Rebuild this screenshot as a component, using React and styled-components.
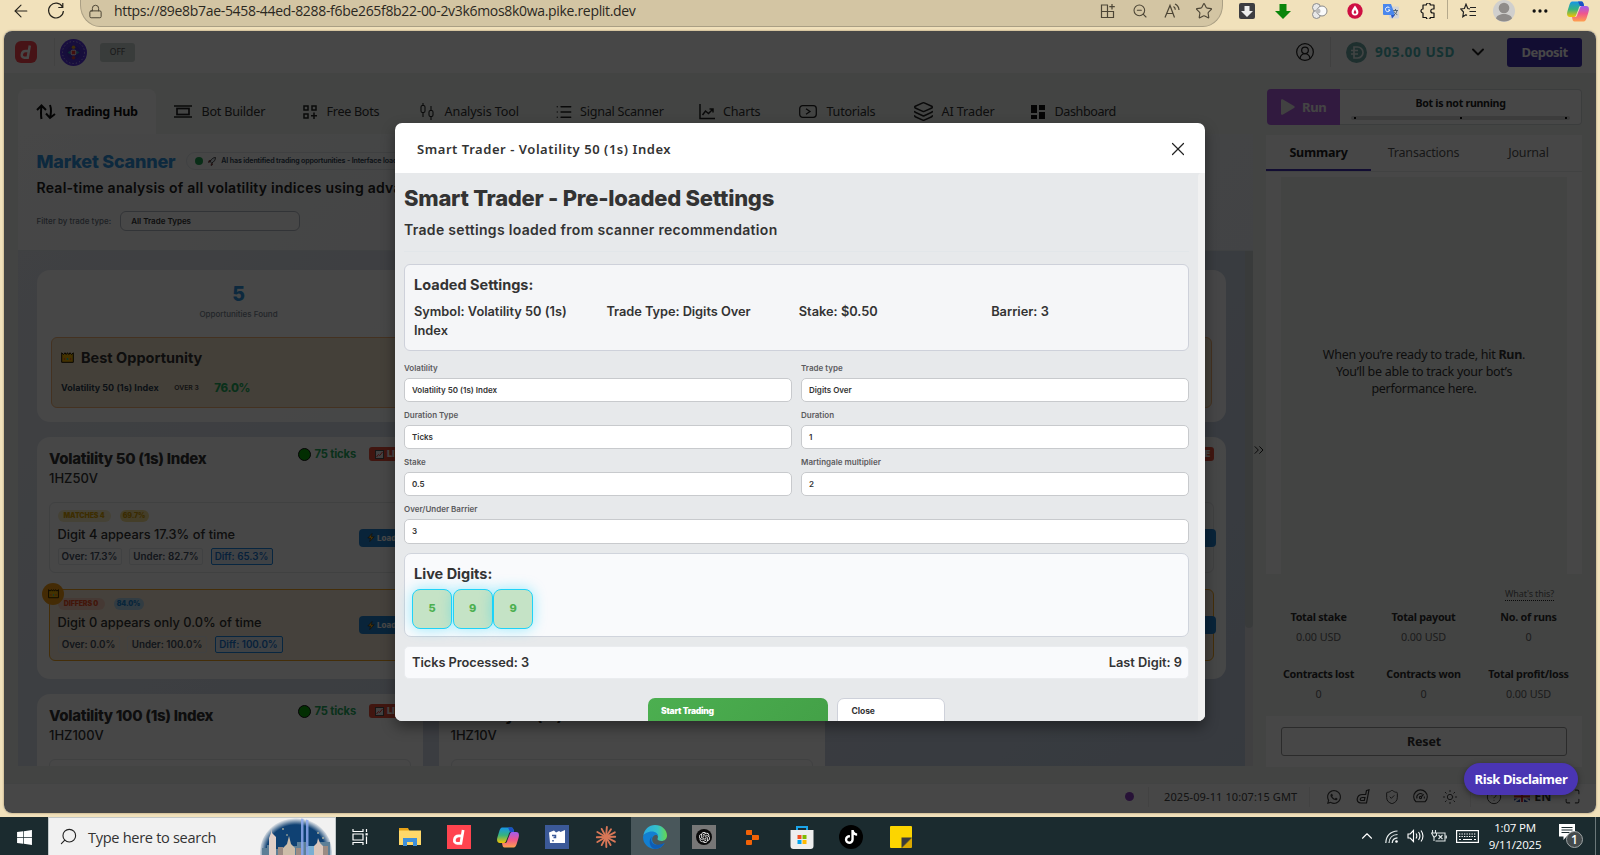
import React from "react";
import styled, { createGlobalStyle, css } from "styled-components";
import {
  ArrowLeft, Lock, ZoomOut, Star, Ellipsis, CircleUserRound, ChevronDown, ChevronUp,
  List, Layers, X, ChevronsRight, ShieldCheck, Sun, CircleHelp, Maximize, Search,
} from "lucide-react";
import { FaWhatsapp, FaWindows, FaTiktok } from "react-icons/fa";
import { SiOpenai } from "react-icons/si";

const ui = '"Inter", "Liberation Sans", sans-serif';
const plex = '"Noto Sans", "Open Sans", sans-serif';
const system = '"Open Sans", "Noto Sans", sans-serif';

const GlobalStyle = createGlobalStyle`
  *, *::before, *::after { box-sizing: border-box; }
  body { margin: 0; background: #f1e1bb; overflow: hidden; }
  svg { display: block; flex: none; }
`;

const Screen = styled.div`
  width: 1600px; height: 855px; overflow: hidden;
  display: flex; flex-direction: column; background: #f1e1bb;
`;

const Text = styled.div`
  font-family: ${(p) => p.$f || ui};
  font-size: ${(p) => p.$s || 12}px;
  font-weight: ${(p) => p.$w || 400};
  line-height: ${(p) => p.$lh || 16}px;
  letter-spacing: ${(p) => p.$ls || 0}px;
  color: ${(p) => p.$c || "#333"};
  text-align: ${(p) => p.$align || "left"};
  white-space: nowrap;
  flex: none;
`;

/* ---------- browser bar ---------- */
const BrowserBar = styled.div`
  height: 31px; flex: none; display: flex; align-items: flex-start; padding-left: 11px; color: #26231c;
`;
const NavButton = styled.div`width: ${(p) => p.$w}px; padding-top: ${(p) => p.$t || 0}px;`;
const AddressBar = styled.div`
  width: 1143px; height: 27px; padding: 0 2px 0 7px; border: 1px solid #aa9f84; border-top: 0;
  border-radius: 0 0 20px 20px / 0 0 22px 22px; background: #d3c5a3;
  display: flex; align-items: flex-start;
`;
const Slot = styled.div`
  width: ${(p) => p.$w}px; height: 22px; flex: none; display: flex; align-items: center; justify-content: center; color: #4d4636;
`;
const Grow = styled.div`flex: 1;`;
const Divider = styled.div`width: 1px; height: ${(p) => p.$h}px; background: ${(p) => p.$c}; flex: none;`;

/* ---------- app frame ---------- */
const Frame = styled.div`
  position: relative; width: 1592px; height: 782px; margin: 0 4px; flex: none; border-radius: 8px; overflow: hidden;
  background: #f0f4f1; display: flex; flex-direction: column; box-shadow: 0 0 2px rgba(80, 60, 20, 0.6);
`;
const Header = styled.header`
  height: 42px; background: #fff; display: flex; align-items: center; flex: none; padding: 0 14px 0 11px;
`;
const Row = styled.div`
  display: flex; align-items: ${(p) => p.$a || "center"}; gap: ${(p) => p.$gap || 0}px;
  height: ${(p) => (p.$h ? p.$h + "px" : "auto")}; padding: ${(p) => p.$p || 0}; flex: none;
`;
const OffBadge = styled.div`
  width: 35px; height: 19px; border-radius: 3px; background: #cdd6d4; margin-left: 13px; display: grid; place-items: center;
`;
const DepositButton = styled.button`
  width: 75px; height: 29px; border: 0; border-radius: 3px; background: #4330b4; padding: 0; margin-left: 19px;
`;
const Body = styled.div`height: 710px; display: flex; flex: none; padding: 16px 0 0 14px;`;
const MainColumn = styled.div`width: 1235px; display: flex; flex-direction: column;`;
const Tabs = styled.nav`height: 45px; display: flex; flex: none;`;
const Tab = styled.div`
  width: ${(p) => p.$w}px; padding-left: 18px; display: flex; align-items: center; border-radius: 8px 8px 0 0;
  background: ${(p) => (p.$active ? "#fff" : "transparent")}; flex: none; color: #222;
`;
const TabIcon = styled.div`width: ${(p) => p.$w}px; flex: none;`;
const Scroller = styled.div`
  height: 515px; overflow: hidden; display: flex; flex: none; background: linear-gradient(135deg, #e4e8ef 0%, #c3cfe2 100%);
`;
const ScannerArea = styled.div`width: 1227px; flex: none;`;
const ScrollTrack = styled.div`width: 8px; background: #e4e7ea;`;
const ScrollThumb = styled.div`height: 377px; background: #cdd2d5; border-radius: 0 0 4px 4px;`;
const ScannerHead = styled.section`
  width: 1235px; height: 117px; padding: 17px 18px 0 18.5px; background: linear-gradient(135deg, #fdfdfd, #f5f7fa 40%, #eef1f6);
  border-bottom: 1px solid #e3e8ee; display: flex; flex-direction: column; flex: none;
`;
const AiPill = styled.div`
  width: 260px; height: 18px; border: 1px solid #e3e7ea; border-radius: 9px; margin-left: 11px; padding-left: 8px;
  display: flex; align-items: center; gap: 5px;
`;
const Dot = styled.div`
  width: ${(p) => p.$d}px; height: ${(p) => p.$d}px; border-radius: 50%; background: ${(p) => p.$c}; flex: none;
  border: ${(p) => p.$b || "none"};
`;
const FilterSelect = styled.div`
  width: 180px; height: 20px; border: 1px solid #b4b9c4; border-radius: 6px; padding-left: 10px; display: flex; align-items: center; background: #fff;
`;
const StatsCard = styled.section`
  width: 1189px; height: 152px; margin: 19px 0 15px 19px; border-radius: 13px; padding: 0 14px; background: rgba(255, 255, 255, 0.92);
  display: flex; flex-direction: column;
`;
const StatsGrid = styled.div`display: grid; grid-template-columns: repeat(3, 375px); gap: 18px; height: 67px; padding-top: 13px;`;
const BestBox = styled.div`
  height: 71px; border: 1px solid #f2b376; border-radius: 6px; background: #f5e6cd; padding: 12px 9px;
  display: flex; flex-direction: column; gap: 13px;
`;
const CardGrid = styled.div`display: grid; grid-template-columns: repeat(3, 386px); gap: 15px 15.5px; padding-left: 19px;`;
const Card = styled.article`
  height: 242px; border-radius: 13px; background: rgba(255, 255, 255, 0.95); padding: 10px 12px; display: flex; flex-direction: column;
`;
const CardTop = styled.div`height: 55px; display: flex; justify-content: space-between; flex: none;`;
const CardName = styled.div`padding-top: 1px;`;
const LiveBadge = styled.div`
  width: 42px; height: 14px; border-radius: 3px; background: #e8503c; display: flex; align-items: center; gap: 3px; padding-left: 6px;
  color: #fff; margin-left: 9px;
`;
const Opportunity = styled.div`
  position: relative; height: ${(p) => (p.$best ? 72 : 71)}px; margin-bottom: 16px; border-radius: 6px; padding: 8px 8px 8px 7.500px;
  border: 1px solid ${(p) => (p.$best ? "#f5a623" : "#e5e8ea")}; background: ${(p) => (p.$best ? "#f6ead6" : "transparent")};
  flex: none; display: flex; justify-content: space-between; align-items: center;
`;
const OppInfo = styled.div`display: flex; flex-direction: column; flex: none;`;
const Tag = styled.span`
  height: 12px; border-radius: 6px; padding: 0; background: ${(p) => p.$bg}; color: ${(p) => p.$c};
  width: ${(p) => p.$w}px; font: 900 7px/12.500px ${ui}; letter-spacing: -0.1px; text-align: center; white-space: nowrap;
`;
const Chip = styled.span`
  width: ${(p) => p.$w}px; height: 17px; border-radius: 2px; text-align: center; white-space: nowrap;
  font: 600 9.8px/15px ${ui}; color: ${(p) => (p.$on ? "#1976d2" : "#444f62")};
  border: 1px solid ${(p) => (p.$on ? "#1e88e5" : "#e6e9ee")}; background: ${(p) => (p.$on ? "#e3eef8" : "transparent")};
`;
const LoadButton = styled.div`
  width: 54px; height: 18px; border-radius: 4px; background: #2283d0; margin-right: -11px; display: flex; align-items: center; gap: 2px; padding-left: 8px;
`;
const CrownBadge = styled.div`
  position: absolute; left: -8px; top: -7px; width: 22px; height: 22px; border-radius: 50%; background: #f39c12; display: grid; place-items: center;
`;

/* ---------- run panel ---------- */
const Gutter = styled.div`width: 13px; padding: 353px 0 0 0;`;
const CollapseIcon = styled(ChevronsRight)`margin-left: -2px;`;
const RunColumn = styled.aside`width: 316px; display: flex; flex-direction: column;`;
const RunBar = styled.div`height: 36px; margin: 0 0 10px 1px; display: flex; flex: none;`;
const RunButton = styled.div`
  width: 73px; border-radius: 4px 0 0 4px; background: #b05ee0; display: flex; align-items: center; gap: 7px; padding-left: 14px; color: #fff;
`;
const RunStatus = styled.div`
  flex: 1; border: 1px solid #d5d9da; border-left: 0; border-radius: 0 4px 4px 0; background: #fff; display: flex; flex-direction: column; align-items: center; padding-top: 5px;
`;
const ProgressLine = styled.div`
  width: 219px; height: 4px; border-radius: 2px; background: #d6d6d6; margin-top: 5px; padding: 1px 3px; display: flex; justify-content: space-between;
`;
const Tick = styled.i`width: 2px; height: 2px; background: #111;`;
const Panel = styled.div`height: 632px; background: #fff; display: flex; flex-direction: column;`;
const PanelTabs = styled.div`height: 36.500px; display: flex; border-bottom: 1px solid #eaecec; flex: none;`;
const PanelTab = styled.div`
  width: 105px; padding-top: 9.500px; border-bottom: ${(p) => (p.$on ? "2px solid #4330b4" : "0")};
`;
const EmptyState = styled.div`
  width: 286px; height: 397px; margin: 5.500px auto 0; background: #f0f4f1; padding-top: 169px; flex: none;
`;
const Totals = styled.div`height: 142px; background: #f0f4f1; padding-top: 12px; flex: none;`;
const WhatsThis = styled.div`margin: 0 28px 0 auto; width: 49px; border-bottom: 1px dotted #222; height: 15px; `;
const TotalsGrid = styled.div`display: grid; grid-template-columns: repeat(3, 105px); row-gap: 17px; margin-top: 6px;`;
const ResetButton = styled.div`width: 286px; height: 30px; margin: 11px auto; border: 1px solid #999; border-radius: 3px; display: grid; place-items: center;`;
const Footer = styled.footer`
  height: 30px; background: #fff; border-top: 1px solid #edefef; display: flex; align-items: center; padding: 0 0 4px 1121px; color: #444; flex: none;
`;
const FootIcon = styled.div`width: ${(p) => p.$w || 29}px; display: flex; justify-content: center; flex: none;`;
const RiskButton = styled.div`
  position: absolute; right: 18px; bottom: 18px; width: 114px; height: 32px; border-radius: 16px; background: #4a35b3;
  display: grid; place-items: center; box-shadow: 0 2px 6px rgba(0, 0, 0, 0.4); padding-bottom: 1px;
`;

/* ---------- dialog ---------- */
const Overlay = styled.div`
  position: absolute; inset: 0; background: rgba(0, 0, 0, 0.72); display: flex; align-items: center; justify-content: center;
`;
const Dialog = styled.div`
  width: 810px; height: 598px; border-radius: 7px; overflow: hidden; background: #fff; display: flex; flex-direction: column;
  box-shadow: 0 6px 14px rgba(0, 0, 0, 0.4);
`;
const DialogHead = styled.div`height: 50px; flex: none; display: flex; align-items: center; justify-content: space-between; padding: 2px 16px 0 22px;`;
const DialogBody = styled.div`flex: 1; display: flex; background: #e7e9eb; overflow: hidden;`;
const DialogContent = styled.div`width: 803px; padding: 11px 9px 0 9px; flex: none;`;
const DialogScroll = styled.div`width: 7px; background: #f1f1f1; border-radius: 4px 0 0 0;`;
const Intro = styled.div`height: 68px; border-bottom: 1px solid #e2e6e9; margin-bottom: 12px;`;
const Settings = styled.section`
  height: 87px; border: 1px solid #ced1da; border-radius: 6px; background: #f5f6f8; padding: 10px 9px; margin-bottom: 9px;
`;
const SettingsGrid = styled.div`display: grid; grid-template-columns: repeat(4, 192.4px); margin-top: 8px;`;
const SettingItem = styled.div`width: 170px; font: 600 12.8px/19px ${ui}; color: #333; letter-spacing: ${(p) => p.$ls || 0}px;`;
const Form = styled.div`display: grid; grid-template-columns: 1fr 1fr; column-gap: 9px; row-gap: 5px;`;
const Field = styled.label`display: block; ${(p) => p.$wide && css`grid-column: span 2;`}`;
const Input = styled.div`
  height: ${(p) => p.$h || 24}px; border: 1px solid #c8cacd; border-radius: 5px; background: #fff; padding: 0 0 1px 7px; margin-top: 2px; display: flex; align-items: center;
`;
const LiveBox = styled.section`
  height: 84px; margin-top: 9px; border: 1px solid #d0d4dc; border-radius: 7px; background: #f9fafc; padding: 10px 7px 0;
`;
const Digits = styled.div`display: flex; gap: 0.6px; margin-top: 5px;`;
const Digit = styled.div`
  width: 40px; height: 40px; border: 1px solid #1fd3f8; border-radius: 8px; background: #c5e3c6; display: grid; place-items: center;
  box-shadow: 0 0 14px rgba(0, 212, 255, 0.4); padding-bottom: 2px;
`;
const Summary = styled.div`
  height: 33px; margin: 9px 0 19px; border: 1px solid #eaecef; border-radius: 5px; background: #f9fafc; display: flex; align-items: center; justify-content: space-between; padding: 0 6px 0 7px;
`;
const Actions = styled.div`display: flex; justify-content: center; gap: 9px;`;
const Action = styled.div`
  width: ${(p) => (p.$primary ? 180 : 108)}px; height: 34px; border-radius: 7px; padding: ${(p) => (p.$primary ? "5px 13px" : "4px 13.5px")};
  background: ${(p) => (p.$primary ? "linear-gradient(135deg, #4caf50, #43a047)" : "#fff")};
  border: ${(p) => (p.$primary ? "0" : "1px solid #ced1da")};
`;

/* ---------- taskbar ---------- */
const Taskbar = styled.div`height: 38px; margin-top: 4px; flex: none; background: #1b2b2f; display: flex; align-items: center;`;
const StartButton = styled.div`width: 48px; padding: 2px 0 0 16px; color: #fff;`;
const SearchBox = styled.div`
  width: 288px; height: 38px; background: #f1f1f1; border: 1px solid #c2c8c9; border-bottom: 0; display: flex; align-items: center; padding: 0 2px 0 10px; gap: 10px;
`;
const AppSlot = styled.div`
  width: 49.1px; height: 38px; padding-top: 2px; display: grid; place-items: center; flex: none; background: ${(p) => (p.$on ? "#49575b" : "transparent")};
`;
const Tile = styled.div`width: ${(p) => p.$d || 24}px; height: ${(p) => p.$d || 24}px; display: grid; place-items: center; background: ${(p) => p.$bg}; border-radius: ${(p) => p.$r || 0}px; color: #fff;`;
const TraySlot = styled.div`width: ${(p) => p.$w}px; display: flex; justify-content: center; flex: none; color: #fff;`;
const SearchGlass = styled(Search)`transform: scaleX(-1);`;

/* ---------- drawings ---------- */
const Reload = () => (
  <svg width="18" height="18" viewBox="0 0 18 18" fill="none" stroke="#26231c" strokeWidth="1.2">
    <path d="M15.5 5A7.4 7.4 0 1 0 16.4 9M15.8 1v4.5h-4.5" />
  </svg>
);
const Jigsaw = () => (
  <svg width="16" height="16" viewBox="0 0 16 16" fill="none" stroke="#111" strokeWidth="1.2" strokeLinejoin="round">
    <path d="M3 2h3.300a2 2 0 0 1 4 0H14v4h-1.200a2 2 0 0 0 0 4H14v4.500h-3.700a2 2 0 0 1-4 0H3V10a2 2 0 0 1 0-4z" />
  </svg>
);
const SplitAdd = () => (
  <svg width="16" height="16" viewBox="0 0 16 16" fill="none" stroke="currentColor" strokeWidth="1.2">
    <path d="M8 2H1.5v12.500h12V8.500H1.500M7.500 2v12.500M12 1v5.500M9.300 3.700h5.500" />
  </svg>
);
const ReadAloud = () => (
  <svg width="17" height="16" viewBox="0 0 17 16" fill="none" stroke="currentColor" strokeWidth="1.2">
    <path d="M1 14.500 6 2.500l4.500 12M2.700 10.500h6.500M9.500 3.500c1.300.8 1.800 1.800 1.800 3.300M11 1c2.800 1.300 3.800 3 4 6" />
  </svg>
);
const DownTile = () => (
  <svg width="16" height="16" viewBox="0 0 16 16">
    <rect width="16" height="16" rx="2" fill="#3d3d41" /><path d="M5.500 3h5v5H14l-6 6-6-6h3.500z" fill="#eee" />
  </svg>
);
const DownArrow = () => (
  <svg width="16" height="15" viewBox="0 0 16 15"><path d="M4.500 0h7v7H16l-8 8-8-8h4.500z" fill="#0b850b" /></svg>
);
const Clover = () => (
  <svg width="17" height="16" viewBox="0 0 17 16" fill="#e8e8e8" stroke="#8a8a8a">
    <circle cx="5.500" cy="4.500" r="4" /><circle cx="5.500" cy="11.500" r="4" /><circle cx="11" cy="8" r="5" fill="#fafafa" /><circle cx="7" cy="8" r="2.500" fill="#bbb" stroke="none" />
  </svg>
);
const Drop = () => (
  <svg width="16" height="16" viewBox="0 0 16 16">
    <circle cx="8" cy="8" r="7.700" fill="#ce0f42" /><path d="M8 2.500C6 5.500 4.600 7 4.600 9a3.400 3.400 0 0 0 6.800 0C11.400 7 10 5.500 8 2.500z" fill="#fff" /><path d="M8 6.500 6.800 9a1.300 1.300 0 1 0 2.400 0z" fill="#ce0f42" />
  </svg>
);
const Translate = () => (
  <svg width="16" height="16" viewBox="0 0 16 16">
    <rect x="6" y="3.500" width="10" height="12" rx="1" fill="#d5d5d5" /><path d="M0 1h8l4 11H1a1 1 0 0 1-1-1z" fill="#4a87ed" /><path d="M8 12h4l-3 3.500z" fill="#2a56c6" />
    <path d="M6.800 5.200A2.300 2.300 0 1 0 7 7H5" fill="none" stroke="#fff" />
    <path d="M10.200 7.500H15M12.500 6v1.500m1.500 0c-.5 2.300-1.500 3.500-3 4.500m0-3.500c1 1.800 2 2.600 3.300 3.200" fill="none" stroke="#567" />
  </svg>
);
const Favorites = () => (
  <svg width="17" height="16" viewBox="0 0 17 16" fill="none" stroke="#222" strokeWidth="1.2">
    <path d="M10 6 7.800 5.500 6 1.200 4.400 5.500 .8 6l2.700 3-.7 4.800L6 11.800l1 .6M10 4.500h6M9.500 8.500h6.500M9.500 12.500H16" />
  </svg>
);
const Avatar = () => (
  <svg width="22" height="22" viewBox="0 0 22 22"><circle cx="11" cy="11" r="11" fill="#d0cfcd" /><circle cx="11" cy="8" r="5.300" fill="#8f8c8a" /><path d="M3 18.500c1-6 15-6 16 0-4 4-12 4-16 0z" fill="#8f8c8a" /></svg>
);
const Copilot = () => (
  <svg width="22" height="21" viewBox="0 0 22 21">
    <defs>
      <linearGradient id="cpa" x1="0" y1="0" x2="0" y2="1"><stop stopColor="#1696e8" /><stop offset=".5" stopColor="#36b37e" /><stop offset="1" stopColor="#f5c400" /></linearGradient>
      <linearGradient id="cpb" x1="0" y1="0" x2="0" y2="1"><stop stopColor="#9f5cf0" /><stop offset=".5" stopColor="#f0568c" /><stop offset="1" stopColor="#ffa04d" /></linearGradient>
    </defs>
    <path d="M6 .5h8.500c1.500 0 2 1.500 2.500 4.500h-3.500c-1 0-1.500 1-2 3L9.500 13c-.8 2.500-1.500 3-3.500 3H3c-3 0-3.500-2.500-2.500-6l2-6.500C3.300 1 4.500.5 6 .5z" fill="url(#cpa)" />
    <path d="M11 .5h3.500c1.500 0 2 1.500 2.500 4.500h-4z" fill="#1c4fc4" />
    <path d="M16 20.500H7.500C6 20.500 5.500 19 5 16h3.500c1 0 1.500-1 2-3L12.500 8c.8-2.500 1.500-3 3.500-3h3c3 0 3.500 2.500 2.500 6l-2 6.500c-.8 2.500-2 3-3.500 3z" fill="url(#cpb)" />
  </svg>
);
const DerivMark = ({ size = 22, r = 6, bg = "#ff444f" }) => (
  <svg width={size} height={size} viewBox="0 0 22 22">
    <rect width="22" height="22" rx={r} fill={bg} />
    <path d="M14.800 4.500 12.700 16.800H9.500c-2 0-3-1.400-2.700-3.400s1.900-3.400 3.900-3.400h2.800" fill="none" stroke="#fff" strokeWidth="2.500" />
  </svg>
);
const RoundEmblem = () => (
  <svg width="27" height="27" viewBox="0 0 27 27">
    <circle cx="13.500" cy="13.500" r="13.500" fill="#5a35e0" /><circle cx="13.500" cy="13.500" r="11" fill="#5535d8" stroke="#c4b8fa" strokeWidth="1" strokeDasharray="1.2 2.2" />
    <circle cx="13.500" cy="13.500" r="7" fill="#4b2fc6" />
    <path d="m7.500 13.500 3-2v4zM19.500 13.500l-3-2v4z" fill="#2fa8b8" /><circle cx="13.500" cy="8.300" r="1.800" fill="#e0a020" /><circle cx="13.500" cy="18.700" r="1.800" fill="#d04040" />
    <rect x="11.200" y="11.200" width="4.600" height="4.600" rx="1" fill="#e33" stroke="#fff" />
  </svg>
);
const SwapIcon = () => (
  <svg width="20" height="16" viewBox="0 0 20 16" fill="none" stroke="#111" strokeWidth="2"><path d="M5.500 15c-.8-4-.5-9 0-13M1 6l4.500-4.500L10 6M14 1c1.500 4 1 9 0 13M10 9.500l4 4.500 5-4" /></svg>
);
const BuilderIcon = () => (
  <svg width="18" height="13" viewBox="0 0 18 13" fill="none" stroke="#222" strokeWidth="1.700"><path d="M0 1h18M0 12h18" /><rect x="3" y="3.500" width="12" height="6" /></svg>
);
const BotsIcon = () => (
  <svg width="14" height="14" viewBox="0 0 14 14" fill="none" stroke="#222" strokeWidth="1.500"><path d="M1 1h4v4H1zM9 1h4v4H9zM1 9h4v4H1zM11 7.500V14M8 10.800h6" /></svg>
);
const CandlesIcon = () => (
  <svg width="14" height="17" viewBox="0 0 14 17" fill="none" stroke="#222" strokeWidth="1.100"><path d="M3 0v2.500m0 7V14M11 3v4.500m0 6V17" /><rect x="1" y="2.500" width="4" height="7" rx="1.500" /><rect x="9" y="7.500" width="4" height="6" rx="1.500" /></svg>
);
const ChartIcon = () => (
  <svg width="16" height="16" viewBox="0 0 16 16" fill="none" stroke="#222" strokeWidth="1.500"><path d="M1 0v14.500h15M3.500 11l3-4 3 2.500L14 5M10.500 5H14v3.500" /></svg>
);
const TutorialIcon = () => (
  <svg width="18" height="13" viewBox="0 0 18 13" fill="none" stroke="#222" strokeWidth="1.300"><rect x=".7" y=".7" width="16.600" height="11.600" rx="3" /><path d="M7 3.800 11 6.500 7 9.300" /></svg>
);
const BoardIcon = () => (
  <svg width="14" height="14" viewBox="0 0 14 14" fill="#111"><path d="M0 0h6v8H0zM8 0h6v5H8zM0 10h6v4H0zM8 7h6v7H8z" /></svg>
);
const CoinIcon = () => (
  <svg width="21" height="21" viewBox="0 0 21 21"><circle cx="10.500" cy="10.500" r="10.500" fill="#6ea8a6" /><path d="M8 5h3.500a5.500 5.500 0 0 1 0 11H8zM5 8.500h7M5 12h7" fill="none" stroke="#e8f2f1" strokeWidth="1.700" /></svg>
);
const Crown = ({ w = 13 }) => (
  <svg width={w} height={w * 0.85} viewBox="0 0 13 11"><path d="M.7 10.300V.8L2.500 2.500 4 .7l1.200 1.800L6.500.7l1.300 1.800L9 .7l1.500 1.800L12.300.8v9.500z" fill="#f5b400" stroke="#1c1400" /><circle cx="3.500" cy="7" r=".8" fill="#e33" /><circle cx="6.500" cy="7" r=".9" fill="#0cc" /><circle cx="9.500" cy="7" r=".8" fill="#e33" /></svg>
);
const Rocket = () => (
  <svg width="8" height="9" viewBox="0 0 8 9"><path d="M7.500.5C5 .5 3.500 2 2 4.500L3.700 6C6 5 7.500 3 7.500.5z" fill="#dbe4ee" stroke="#222" strokeWidth=".8" /><path d="M2.500 3.500H1L.3 5.500 2 5zm2 3v1.300L3 8.700 3.200 6.700z" fill="#d33" stroke="#222" strokeWidth=".5" /></svg>
);
const Bolt = () => <svg width="8" height="9" viewBox="0 0 8 9"><path d="M5 .5.8 5h2.700L2.800 8.500 7.200 3.800H4.500z" fill="#ffb41f" stroke="#222" strokeWidth=".6" /></svg>;
const MiniChart = () => <svg width="9" height="9" viewBox="0 0 9 9"><rect x=".5" y=".5" width="8" height="8" fill="#eee" stroke="#555" /><path d="m1.500 7 2-2.500 1.200 1L7.500 2" fill="none" stroke="#e33" /></svg>;
const DerivLine = () => (
  <svg width="14" height="15" viewBox="0 0 14 15" fill="none" stroke="#333" strokeWidth="1.200"><path d="M10.500 1.500 13 .8 10.500 14H5C2 14 .8 12 1.300 9.500S4 5.500 6.500 5.500h3.200zM8.900 8.500H6.500c-2.600 0-3 3-.8 3h2.600z" /></svg>
);
const SpeedIcon = () => (
  <svg width="15" height="15" viewBox="0 0 15 15" fill="none" stroke="#333" strokeWidth="1.100"><path d="M3 12.800a6.800 6.800 0 1 1 9 0zM4 9.500a3.700 3.700 0 0 1 5.500-4.300M11.300 7.500v2" /><circle cx="7.500" cy="8.500" r="1.100" /><path d="m8.500 7.500 2.200-2.200" /></svg>
);
const Flag = () => (
  <svg width="16" height="11" viewBox="0 0 16 11"><path fill="#244aa5" d="M0 0h16v11H0z" /><path d="m0 0 16 11M16 0 0 11" stroke="#fff" strokeWidth="2" /><path d="M8 0v11M0 5.500h16" stroke="#fff" strokeWidth="4" /><path d="M8 0v11M0 5.500h16" stroke="#e02b3c" strokeWidth="2" /></svg>
);
const Skyline = () => (
  <svg width="74" height="37" viewBox="0 0 74 37">
    <defs>
      <radialGradient id="sky" gradientUnits="userSpaceOnUse" cx="0" cy="0" r="1" gradientTransform="translate(37 34) scale(37 34)"><stop offset=".8" stopColor="#0f4173" /><stop offset="1" stopColor="#0f4173" stopOpacity="0" /></radialGradient>
      <clipPath id="skyclip"><ellipse cx="37" cy="34" rx="36" ry="34" /></clipPath>
    </defs>
    <g clipPath="url(#skyclip)">
      <path fill="url(#sky)" d="M0 0h74v37H0z" />
      <path fill="#5d7f97" d="M3 37v-7h5v-3h8v4h10v-3h12v-4h9v5h12v-5h12v13z" />
      <path fill="#e0cfc8" d="M10 37V20l2-5 1-4v4l4 4v18z" /><path fill="#cdbda9" d="M24 37V30l4-4 2-8 2 8 4 4v7z" /><path fill="#dcc6ba" d="M55 37V28l3-3 1-5 2 5 3 3v9z" />
      <path fill="#9c8b83" d="M19 37v-8h5v8zM37 37v-7h5v7zM64 37v-9h5v9z" /><path fill="#7aaed2" d="M49 37v-9h6v9z" />
      <path fill="#8ea9f0" opacity=".85" d="M42 0h2.500v37H42zM47 0h2.500v37H47z" />
    </g>
    <g fill="#ffe9b0"><circle cx="24" cy="11" r=".8" /><circle cx="28" cy="17" r=".7" /><circle cx="59" cy="15" r=".8" /><circle cx="64" cy="20" r=".8" /></g>
  </svg>
);
const TaskView = () => (
  <svg width="17" height="16" viewBox="0 0 17 16" fill="none" stroke="#fff" strokeWidth="1.200"><path d="M1 0v2.500h10V0M1 16v-2.500h10V16M1 5h10v6H1zM14.500 0v3M14.500 7.500V15" /><path d="M13.500 4.200h2.200v2.200h-2.200z" fill="#fff" stroke="none" /></svg>
);
const Folder = () => (
  <svg width="22" height="18" viewBox="0 0 22 18"><path fill="#e8a317" d="M0 0h9l1.500 3H0z" /><path fill="#ffd869" d="M0 2.500h22V17H0z" /><path fill="#3f90da" d="M4 10h14v8h-4v-4H8v4H4z" /></svg>
);
const BlueDoc = () => <svg width="16" height="14" viewBox="0 0 16 14"><path d="M0 2.500 5 .5l2 2 3-1.500 1.500 1L16 0v13H1z" fill="#fff" /><path d="M3 5.500h3.500v2h-2M4 10v1.500" stroke="#3b5998" strokeWidth="1.500" fill="none" /></svg>;
const Burst = () => (
  <svg width="22" height="22" viewBox="-11 -11 22 22" stroke="#d97757" strokeWidth="1.900" strokeLinecap="round">
    {[5, 33, 62, 88, 118, 150, 178, 208, 240, 268, 300, 332].map((a, i) => <path key={a} d={`M0 0V-${i % 2 ? 9.2 : 10}`} transform={`rotate(${a})`} />)}
  </svg>
);
const Edge = () => (
  <svg width="24" height="24" viewBox="0 0 24 24">
    <defs><linearGradient id="eg"><stop stopColor="#2aa9e0" /><stop offset=".6" stopColor="#35c1c9" /><stop offset="1" stopColor="#66d84d" /></linearGradient></defs>
    <path d="M.3 11C1 4.500 6 0 12 0c7 0 12 5 12 10.500 0 3.300-2.500 5.500-5.500 5.500-2.500 0-4.500-1-4-2.200 1.500-2.500-.5-6.300-5-6.300C5 7.500 1.500 9 .3 11z" fill="url(#eg)" />
    <path d="M.1 11.500C1 9 4.500 6.500 9 6.500c3.500 0 6 2.300 6.300 5-1-1.500-2.500-1.800-4-1-4 2.500-2.500 10.500 5.500 9.500 2-.2 3.500-1 5-1.900C19.500 22 16 24 12 24 5 24-.5 18 .1 11.500z" fill="#127fd2" />
    <path d="M9 11.500c-3 5 1.500 11.500 12.500 6.600C19 22.500 15.500 24 12 24 6 22.500 5 15 9 11.500z" fill="#0f5db5" />
  </svg>
);
const Replit = () => <svg width="14" height="15" viewBox="0 0 14 15" fill="#f26207"><path d="M1 0h5v5H1a1 1 0 0 1-1-1V1a1 1 0 0 1 1-1zM6 5h6a1 1 0 0 1 1 1v3a1 1 0 0 1-1 1H6zM0 11a1 1 0 0 1 1-1h5v4a1 1 0 0 1-1 1H1a1 1 0 0 1-1-1z" /></svg>;
const Store = () => (
  <svg width="24" height="24" viewBox="0 0 24 24"><path d="M7 6V2h10v4" fill="none" stroke="#1ba5ea" strokeWidth="2" /><path d="M.5 5h23v16a3 3 0 0 1-3 3h-17a3 3 0 0 1-3-3z" fill="#eee" /><path fill="#f25022" d="M7.500 10h4v4h-4z" /><path fill="#7fba00" d="M12.500 10h4v4h-4z" /><path fill="#00a4ef" d="M7.500 15h4v4h-4z" /><path fill="#ffb900" d="M12.500 15h4v4h-4z" /></svg>
);
const Sticky = () => <svg width="22" height="22" viewBox="0 0 22 22"><path d="M1 0h20a1 1 0 0 1 1 1v11L12 22H1a1 1 0 0 1-1-1V1a1 1 0 0 1 1-1z" fill="#fcd500" /><path d="M12 22h9a1 1 0 0 0 1-1v-9z" fill="#dba800" /><path d="M11.500 11.500H22L11.500 22z" fill="#3b3b3b" /></svg>;
const Wifi = () => (
  <svg width="13" height="13" viewBox="0 0 13 13" fill="none" stroke="#e8eeee" strokeWidth="1.200"><path d="M.8 13C1 6 5.500 1.200 12.500 1M4 13c.2-5 3.500-8.400 8.500-8.500M7.200 13c.2-3 2-5 5.300-5.200" /><circle cx="11.500" cy="11.500" r="1.300" fill="#fff" stroke="none" /></svg>
);
const Sound = () => <svg width="17" height="14" viewBox="0 0 17 14" fill="none" stroke="#fff" strokeWidth="1.100"><path d="M1 5h2.200L6.500 1.500v11L3.200 9H1zM9 4.500c1 1.500 1 3.500 0 5M11.500 3c1.800 2.500 1.800 5.500 0 8M14 1.500c2.500 3.500 2.500 7.500 0 11" /></svg>;
const Battery = () => <svg width="16" height="13" viewBox="0 0 16 13" fill="none" stroke="#dfe5e5" strokeWidth="1.100"><path d="M1.500 0v3m3-3v3M.5 3h5v2.500L3 7.500zM3 7.500V11M6 3h8v8H4.500M15.300 5.500v3M7.500 5l4 4m0-4-4 4" /></svg>;
const Keyboard = () => <svg width="23" height="13" viewBox="0 0 23 13" fill="none" stroke="#fff" strokeWidth="1.200"><rect x=".6" y=".6" width="21.800" height="11.800" /><path d="M3 4h17M3 6.500h17" strokeDasharray="1.300 1.200" /><path d="M3 9.500h2M7 9.500h9M18 9.500h2" /></svg>;
const Notice = () => (
  <svg width="26" height="26" viewBox="0 0 26 26"><path d="M1 1h16v12.500H8.500L5.500 17v-3.500H1z" fill="#fff" /><path d="M3.500 4.500h11M3.500 7h11M3.500 9.500h8" stroke="#1b2b2f" strokeWidth="1.100" /><circle cx="16.500" cy="16.500" r="8" fill="#454b4d" stroke="#9fa5a6" /><text x="16.500" y="20.500" textAnchor="middle" fill="#fff" fontSize="12" fontFamily="Open Sans" fontWeight="600">1</text></svg>
);

/* ---------- data ---------- */
const tabs = [
  ["Trading Hub", 138, 29, SwapIcon, -0.35], ["Bot Builder", 128.5, 27.5, BuilderIcon, -0.23], ["Free Bots", 117, 24, BotsIcon, -0.3],
  ["Analysis Tool", 135.5, 25, CandlesIcon, -0.1], ["Signal Scanner", 144, 25, null, -0.25], ["Charts", 100, 24, ChartIcon, -0.2],
  ["Tutorials", 113.5, 27.5, TutorialIcon, -0.25], ["AI Trader", 118.5, 29, null, -0.1], ["Dashboard", 110, 23.5, BoardIcon, -0.42],
];
const opportunities = [
  { tags: [["MATCHES 4", 53, "#f7ebc0", "#dba506"], ["69.7%", 29, "#f5df94", "#cf9a06"]], gap: 9, text: "Digit 4 appears 17.3% of time", chips: [["Over: 17.3%", 64], ["Under: 82.7%", 74], ["Diff: 65.3%", 62]] },
  { best: true, tags: [["DIFFERS 0", 47, "#f7cdbc", "#ee4f27"], ["84.0%", 30, "#b3d6ee", "#2187d1"]], gap: 9, text: "Digit 0 appears only 0.0% of time", chips: [["Over: 0.0%", 62], ["Under: 100.0%", 80], ["Diff: 100.0%", 68]] },
];
const totals = [["Total stake", "0.00 USD"], ["Total payout", "0.00 USD"], ["No. of runs", "0"], ["Contracts lost", "0"], ["Contracts won", "0"], ["Total profit/loss", "0.00 USD"]];
const fields = [["Volatility", "Volatility 50 (1s) Index"], ["Trade type", "Digits Over"], ["Duration Type", "Ticks"], ["Duration", "1"], ["Stake", "0.5"], ["Martingale multiplier", "2"], ["Over/Under Barrier", "3"]];

function MarketCard({ title, code }) {
  return (
    <Card>
      <CardTop>
        <CardName>
          <Text $s={15} $w={800} $lh={22} $ls={-0.3}>{title}</Text>
          <Text $s={13} $w={500} $lh={17}>{code}</Text>
        </CardName>
        <Row $h={14} $gap={4}>
          <Dot $d={13} $c="#0aa50a" $b="1px solid #111" />
          <Text $s={11.2} $w={700} $c="#27ae60" $ls={-0.15}>75 ticks</Text>
          <LiveBadge><MiniChart /><Text $s={9} $w={900} $c="#fff" $lh={12}>LIVE</Text></LiveBadge>
        </Row>
      </CardTop>
      {opportunities.map((o) => (
        <Opportunity key={o.text} $best={o.best}>
          {o.best && <CrownBadge><Crown w={11} /></CrownBadge>}
          <OppInfo>
            <Row $gap={o.gap} $h={12}>{o.tags.map(([t, w, bg, c]) => <Tag key={t} $w={w} $bg={bg} $c={c}>{t}</Tag>)}</Row>
            <Text $s={12.8} $w={500} $lh={26} $ls={0}>{o.text}</Text>
            <Row $gap={7.500}>{o.chips.map(([t, w], i) => <Chip key={t} $w={w} $on={i === 2}>{t}</Chip>)}</Row>
          </OppInfo>
          <LoadButton><Bolt /><Text $s={8} $w={800} $c="#fff">Load</Text></LoadButton>
        </Opportunity>
      ))}
    </Card>
  );
}

export default function App() {
  return (
    <Screen>
      <GlobalStyle />
      <BrowserBar>
        <NavButton $w={36} $t={1}><ArrowLeft size={20} strokeWidth={1.300} /></NavButton>
        <NavButton $w={33} $t={2}><Reload /></NavButton>
        <AddressBar>
          <Slot $w={14}><Lock size={15} strokeWidth={1.600} /></Slot>
          <Slot $w={12} />
          <Text $f={system} $s={14} $lh={22} $ls={-0.320} $c="#2b281f">https://89e8b7ae-5458-44ed-8288-f6be265f8b22-00-2v3k6mos8k0wa.pike.replit.dev</Text>
          <Grow />
          <Slot $w={32}><SplitAdd /></Slot>
          <Slot $w={32}><ZoomOut size={16} strokeWidth={1.600} /></Slot>
          <Slot $w={32}><ReadAloud /></Slot>
          <Slot $w={32}><Star size={18} strokeWidth={1.500} /></Slot>
        </AddressBar>
        <Slot $w={48}><DownTile /></Slot>
        <Slot $w={24}><DownArrow /></Slot>
        <Slot $w={48}><Clover /></Slot>
        <Slot $w={24}><Drop /></Slot>
        <Slot $w={48}><Translate /></Slot>
        <Slot $w={26}><Jigsaw /></Slot>
        <Slot $w={6} />
        <Divider $h={19} $c="#b5a98c" />
        <Slot $w={41}><Favorites /></Slot>
        <Slot $w={30}><Avatar /></Slot>
        <Slot $w={42}><Ellipsis size={20} color="#111" /></Slot>
        <Slot $w={34}><Copilot /></Slot>
      </BrowserBar>

      <Frame>
        <Header>
          <DerivMark />
          <Slot $w={17} />
          <Divider $h={28} $c="#eee" />
          <Slot $w={5} />
          <RoundEmblem />
          <OffBadge><Text $f={plex} $s={8.500} $lh={10} $c="#555">OFF</Text></OffBadge>
          <Grow />
          <CircleUserRound size={20} strokeWidth={1.500} color="#222" />
          <Slot $w={15} />
          <Divider $h={30} $c="#e5e5e5" />
          <Slot $w={15} />
          <CoinIcon />
          <Slot $w={8} />
          <Text $f={plex} $s={13.600} $w={700} $c="#4bb4b3" $ls={0.600}>903.00 USD</Text>
          <Slot $w={13} />
          <ChevronDown size={20} strokeWidth={2.300} color="#222" />
          <DepositButton><Text $f={plex} $s={13} $w={700} $c="#fff" $align="center" $ls={-0.500}>Deposit</Text></DepositButton>
        </Header>

        <Body>
          <MainColumn>
            <Tabs>
              {tabs.map(([name, w, iw, Icon, ls], i) => (
                <Tab key={name} $w={w} $active={i === 0}>
                  <TabIcon $w={iw}>
                    {Icon ? <Icon /> : name === "AI Trader" ? <Layers size={21} strokeWidth={1.800} /> : <List size={18} strokeWidth={1.800} />}
                  </TabIcon>
                  <Text $f={plex} $s={12.600} $w={i === 0 ? 700 : 400} $ls={ls} $c={i === 0 ? "#111" : "#333"}>{name}</Text>
                </Tab>
              ))}
            </Tabs>
            <ScannerHead>
              <Row $h={20}>
                <Text $s={18} $w={800} $c="#2f93dd" $lh={19} $ls={-0.220}>Market Scanner</Text>
                <AiPill>
                  <Dot $d={8} $c="#22a352" /><Rocket />
                  <Text $s={7.100} $w={600} $c="#2c3e50" $ls={-0.140}>AI has identified trading opportunities - Interface loading</Text>
                </AiPill>
              </Row>
              <Row $h={33}><Text $s={14} $w={600} $ls={0.250} $c="#222">Real-time analysis of all volatility indices using advanced AI</Text></Row>
              <Row $h={33} $gap={9}>
                <Text $s={8} $w={500} $c="#6c7683">Filter by trade type:</Text>
                <FilterSelect><Text $s={8} $w={600} $c="#333">All Trade Types</Text></FilterSelect>
              </Row>
            </ScannerHead>
            <Scroller>
              <ScannerArea>
                <StatsCard>
                  <StatsGrid>
                    <div>
                      <Text $s={19.500} $w={800} $c="#2f93dd" $lh={22} $align="center">5</Text>
                      <Text $s={8} $w={500} $c="#7b8794" $lh={18} $align="center">Opportunities Found</Text>
                    </div>
                  </StatsGrid>
                  <BestBox>
                    <Row $gap={7} $h={16}><Crown /><Text $s={14.500} $w={700}>Best Opportunity</Text></Row>
                    <Row $gap={15.500} $h={18}>
                      <Text $s={9} $w={700} $c="#2c3e50" $ls={0.030}>Volatility 50 (1s) Index</Text>
                      <Text $s={6.800} $w={600} $c="#444">OVER 3</Text>
                      <Text $s={11.500} $w={800} $c="#27ae60" $ls={-0.300}>76.0%</Text>
                    </Row>
                  </BestBox>
                </StatsCard>
                <CardGrid>
                  <MarketCard title="Volatility 50 (1s) Index" code="1HZ50V" />
                  <MarketCard title="Volatility 25 (1s) Index" code="1HZ25V" />
                  <MarketCard title="Volatility 75 (1s) Index" code="1HZ75V" />
                  <MarketCard title="Volatility 100 (1s) Index" code="1HZ100V" />
                  <MarketCard title="Volatility 10 (1s) Index" code="1HZ10V" />
                </CardGrid>
              </ScannerArea>
              <ScrollTrack><ScrollThumb /></ScrollTrack>
            </Scroller>
          </MainColumn>
          <Gutter><CollapseIcon size={16} strokeWidth={1.400} color="#111" /></Gutter>
          <RunColumn>
            <RunBar>
              <RunButton>
                <svg width="14" height="16" viewBox="0 0 14 16"><path d="M0 1.500C0 .3 1 0 2 .5L13 7c1 .6 1 1.400 0 2L2 15.500c-1 .5-2 .2-2-1z" fill="#e8e8e8" /></svg>
                <Text $f={plex} $s={13} $w={700} $c="#f4f4f4" $ls={-0.400}>Run</Text>
              </RunButton>
              <RunStatus>
                <Text $f={plex} $s={10.600} $w={700} $c="#222" $ls={-0.280}>Bot is not running</Text>
                <ProgressLine><Tick /><Tick /><Tick /></ProgressLine>
              </RunStatus>
            </RunBar>
            <Panel>
              <PanelTabs>
                {["Summary", "Transactions", "Journal"].map((t, i) => (
                  <PanelTab key={t} $on={i === 0}><Text $f={plex} $s={12.500} $w={i ? 400 : 700} $align="center" $ls={-0.200} $c={i ? "#555" : "#222"}>{t}</Text></PanelTab>
                ))}
              </PanelTabs>
              <EmptyState>
                <Text $f={plex} $s={12.500} $lh={17} $align="center" $ls={-0.270}>When you’re ready to trade, hit <b>Run</b>.<br />You’ll be able to track your bot’s<br />performance here.</Text>
              </EmptyState>
              <Totals>
                <WhatsThis><Text $f={plex} $s={9} $lh={16} $ls={-0.100} $c="#666">What's this?</Text></WhatsThis>
                <TotalsGrid>
                  {totals.map(([a, b]) => (
                    <div key={a}>
                      <Text $f={plex} $s={10.800} $w={700} $lh={20} $align="center" $ls={-0.270} $c="#2e2e2e">{a}</Text>
                      <Text $f={plex} $s={10.800} $lh={20} $align="center" $ls={-0.100} $c="#666">{b}</Text>
                    </div>
                  ))}
                </TotalsGrid>
              </Totals>
              <ResetButton><Text $f={plex} $s={12.500} $w={700} $ls={-0.200}>Reset</Text></ResetButton>
            </Panel>
          </RunColumn>
        </Body>

        <Footer>
          <Dot $d={9} $c="#8d43c4" />
          <Slot $w={14} /><Divider $h={20} $c="#eee" /><Slot $w={15} />
          <Text $f={plex} $s={11} $ls={0.100} $c="#444">2025-09-11 10:07:15 GMT</Text>
          <Slot $w={12} /><Divider $h={20} $c="#eee" /><Slot $w={9} />
          <FootIcon><FaWhatsapp size={16} /></FootIcon>
          <FootIcon><DerivLine /></FootIcon>
          <FootIcon><ShieldCheck size={16} strokeWidth={1.500} /></FootIcon>
          <FootIcon><SpeedIcon /></FootIcon>
          <FootIcon><Sun size={16} strokeWidth={1.500} /></FootIcon>
          <Slot $w={6} /><Divider $h={20} $c="#eee" /><Slot $w={8} />
          <FootIcon><CircleHelp size={16} strokeWidth={1.500} /></FootIcon>
          <Slot $w={6} /><Flag /><Slot $w={4} />
          <Text $f={plex} $s={12.500} $w={700}>EN</Text>
          <Slot $w={13} /><Maximize size={17} strokeWidth={1.500} />
        </Footer>

        <Overlay>
          <Dialog>
            <DialogHead>
              <Text $f={plex} $s={13} $w={600} $ls={0.550}>Smart Trader - Volatility 50 (1s) Index</Text>
              <X size={22} strokeWidth={1.300} color="#222" />
            </DialogHead>
            <DialogBody>
              <DialogContent>
                <Intro>
                  <Text $s={22} $w={800} $lh={29} $ls={-0.260}>Smart Trader - Pre-loaded Settings</Text>
                  <Text $s={14} $w={600} $lh={33} $ls={0.310}>Trade settings loaded from scanner recommendation</Text>
                </Intro>
                <Settings>
                  <Text $s={14.500} $w={700} $lh={19} $ls={0}>Loaded Settings:</Text>
                  <SettingsGrid>
                    <SettingItem>Symbol: Volatility 50 (1s) Index</SettingItem>
                    <SettingItem $ls={-0.050}>Trade Type: Digits Over</SettingItem>
                    <SettingItem>Stake: $0.50</SettingItem>
                    <SettingItem>Barrier: 3</SettingItem>
                  </SettingsGrid>
                </Settings>
                <Form>
                  {fields.map(([label, value], i) => (
                    <Field key={label} $wide={i === 6}>
                      <Text $s={8} $w={600} $c="#5b5b5e">{label}</Text>
                      <Input $h={i === 6 ? 25 : 24}><Text $s={8} $w={600}>{value}</Text></Input>
                    </Field>
                  ))}
                </Form>
                <LiveBox>
                  <Row $p="0 0 0 2px"><Text $s={14.500} $w={700} $lh={20}>Live Digits:</Text></Row>
                  <Digits>{[5, 9, 9].map((d, i) => <Digit key={i}><Text $s={11} $w={800} $c="#4caf50">{d}</Text></Digit>)}</Digits>
                </LiveBox>
                <Summary>
                  <Text $s={12.800} $w={600} $ls={-0.040}>Ticks Processed: 3</Text>
                  <Text $s={12.800} $w={600}>Last Digit: 9</Text>
                </Summary>
                <Actions>
                  <Action $primary><Text $s={8.500} $w={900} $c="#fff" $ls={-0.250}>Start Trading</Text></Action>
                  <Action><Text $s={8.500} $w={700} $ls={-0.050}>Close</Text></Action>
                </Actions>
              </DialogContent>
              <DialogScroll />
            </DialogBody>
          </Dialog>
        </Overlay>
        <RiskButton><Text $f={plex} $s={13} $w={700} $c="#fff" $ls={-0.400}>Risk Disclaimer</Text></RiskButton>
      </Frame>

      <Taskbar>
        <StartButton><FaWindows size={17} /></StartButton>
        <SearchBox>
          <SearchGlass size={19} strokeWidth={1.400} color="#222" />
          <Text $f={system} $s={14.600} $lh={20} $c="#333" $ls={-0.320}>Type here to search</Text>
          <Grow /><Skyline />
        </SearchBox>
        <AppSlot><TaskView /></AppSlot>
        <AppSlot><Folder /></AppSlot>
        <AppSlot><DerivMark size={24} r={0} /></AppSlot>
        <AppSlot><Copilot /></AppSlot>
        <AppSlot><Tile $bg="#3b5998"><BlueDoc /></Tile></AppSlot>
        <AppSlot><Burst /></AppSlot>
        <AppSlot $on><Edge /></AppSlot>
        <AppSlot><Tile $bg="#777"><Tile $d={16} $bg="#0a0a0a" $r={8}><SiOpenai size={11} /></Tile></Tile></AppSlot>
        <AppSlot><Replit /></AppSlot>
        <AppSlot><Store /></AppSlot>
        <AppSlot><Tile $bg="#000" $r={12}><FaTiktok size={14} /></Tile></AppSlot>
        <AppSlot><Sticky /></AppSlot>
        <Grow />
        <TraySlot $w={25}><ChevronUp size={18} strokeWidth={1.500} /></TraySlot>
        <TraySlot $w={25}><Wifi /></TraySlot>
        <TraySlot $w={23}><Sound /></TraySlot>
        <TraySlot $w={24}><Battery /></TraySlot>
        <TraySlot $w={32}><Keyboard /></TraySlot>
        <TraySlot $w={64}><Text $f={system} $s={11.500} $lh={17.500} $c="#fff" $align="center" $ls={-0.200}>1:07 PM<br />9/11/2025</Text></TraySlot>
        <TraySlot $w={48}><Notice /></TraySlot>
        <Divider $h={38} $c="#6b7779" /><Slot $w={4} />
      </Taskbar>
    </Screen>
  );
}
